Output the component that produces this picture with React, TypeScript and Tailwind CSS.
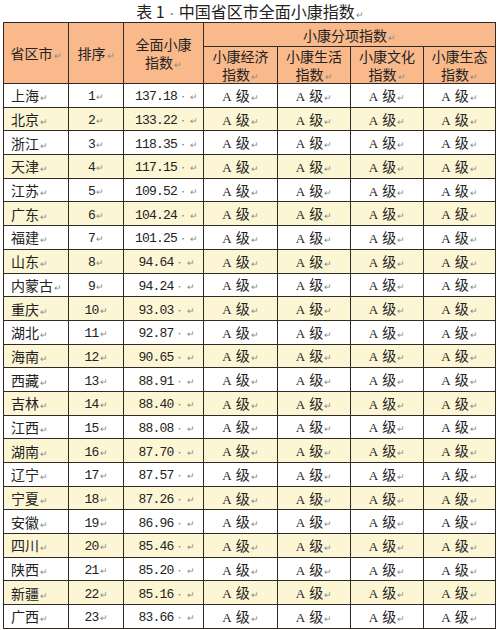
const rows: [string, string][] = [
  ["上海", "137.18"],
  ["北京", "133.22"],
  ["浙江", "118.35"],
  ["天津", "117.15"],
  ["江苏", "109.52"],
  ["广东", "104.24"],
  ["福建", "101.25"],
  ["山东", "94.64"],
  ["内蒙古", "94.24"],
  ["重庆", "93.03"],
  ["湖北", "92.87"],
  ["海南", "90.65"],
  ["西藏", "88.91"],
  ["吉林", "88.40"],
  ["江西", "88.08"],
  ["湖南", "87.70"],
  ["辽宁", "87.57"],
  ["宁夏", "87.26"],
  ["安徽", "86.96"],
  ["四川", "85.46"],
  ["陕西", "85.20"],
  ["新疆", "85.16"],
  ["广西", "83.66"],
];

const cjk = "font-['Noto_Sans_CJK_SC',sans-serif]";
const mono = "font-['Liberation_Mono','Noto_Sans_CJK_SC',monospace]";

function Mark() {
  return <span className="ml-[1px] text-[9px] leading-none text-[#8a8a8a]">↵</span>;
}

function Grade() {
  return (
    <span className="text-[14px] text-[#222]">
      <span className="font-['Liberation_Serif',serif] text-[13px]">A</span>
      <span className="ml-[4px]">级</span>
      <Mark />
    </span>
  );
}

function TwoLine({ top }: { top: string }) {
  return (
    <div className="flex flex-col items-center leading-[18px]">
      <span className="block h-[18px] leading-[18px]">{top}</span>
      <span className="block h-[18px] leading-[18px]">
        指数
        <Mark />
      </span>
    </div>
  );
}

const cell = "border border-[#2f2a25] p-0";

export default function App() {
  return (
    <div className={`w-[500px] h-[630px] overflow-hidden bg-white ${cjk}`}>
      <h1 className="h-[22px] text-center text-[16px] leading-[22px] text-[#222]">
        表 1<span className="text-[#888] text-[10px] mx-[2px]">·</span>中国省区市全面小康指数
        <Mark />
      </h1>
      <table className="ml-[3px] w-[492px] border-collapse table-fixed text-[#222]">
        <colgroup>
          <col className="w-[65px]" />
          <col className="w-[55px]" />
          <col className="w-[80px]" />
          <col className="w-[74px]" />
          <col className="w-[73px]" />
          <col className="w-[73px]" />
          <col className="w-[72px]" />
        </colgroup>
        <thead className="bg-[#f9b98b] text-[14px] leading-[18px]">
          <tr className="h-[24px]">
            <th rowSpan={2} className={`${cell} font-normal`}>
              省区市<Mark />
            </th>
            <th rowSpan={2} className={`${cell} font-normal`}>
              排序<Mark />
            </th>
            <th rowSpan={2} className={`${cell} font-normal`}>
              <TwoLine top="全面小康" />
            </th>
            <th colSpan={4} className={`${cell} font-normal`}>
              小康分项指数<Mark />
            </th>
          </tr>
          <tr className="h-[36px]">
            {["经济", "生活", "文化", "生态"].map((k) => (
              <th key={k} className={`${cell} font-normal`}>
                <TwoLine top={`小康${k}`} />
              </th>
            ))}
          </tr>
        </thead>
        <tbody className="leading-[16px]">
          {rows.map(([name, score], i) => (
            <tr
              key={name}
              className={`h-[23.7px] ${i % 2 === 1 ? "bg-[#fdf6d4]" : "bg-white"}`}
            >
              <td className={`${cell} pl-[7px] text-[14px]`}>
                {name}
                <Mark />
              </td>
              <td className={`${cell} text-center`}>
                <span className={`${mono} text-[13px] tracking-[-0.8px]`}>{i + 1}</span>
                <Mark />
              </td>
              <td className={`${cell} text-center pl-[6px]`}>
                <span className={`${mono} text-[13px] tracking-[-0.8px]`}>{score}</span>
                <span className="text-[8px] text-[#888] mx-[2px]">·</span>
                <Mark />
              </td>
              {[0, 1, 2, 3].map((k) => (
                <td key={k} className={`${cell} text-center`}>
                  <Grade />
                </td>
              ))}
            </tr>
          ))}
        </tbody>
      </table>
    </div>
  );
}
